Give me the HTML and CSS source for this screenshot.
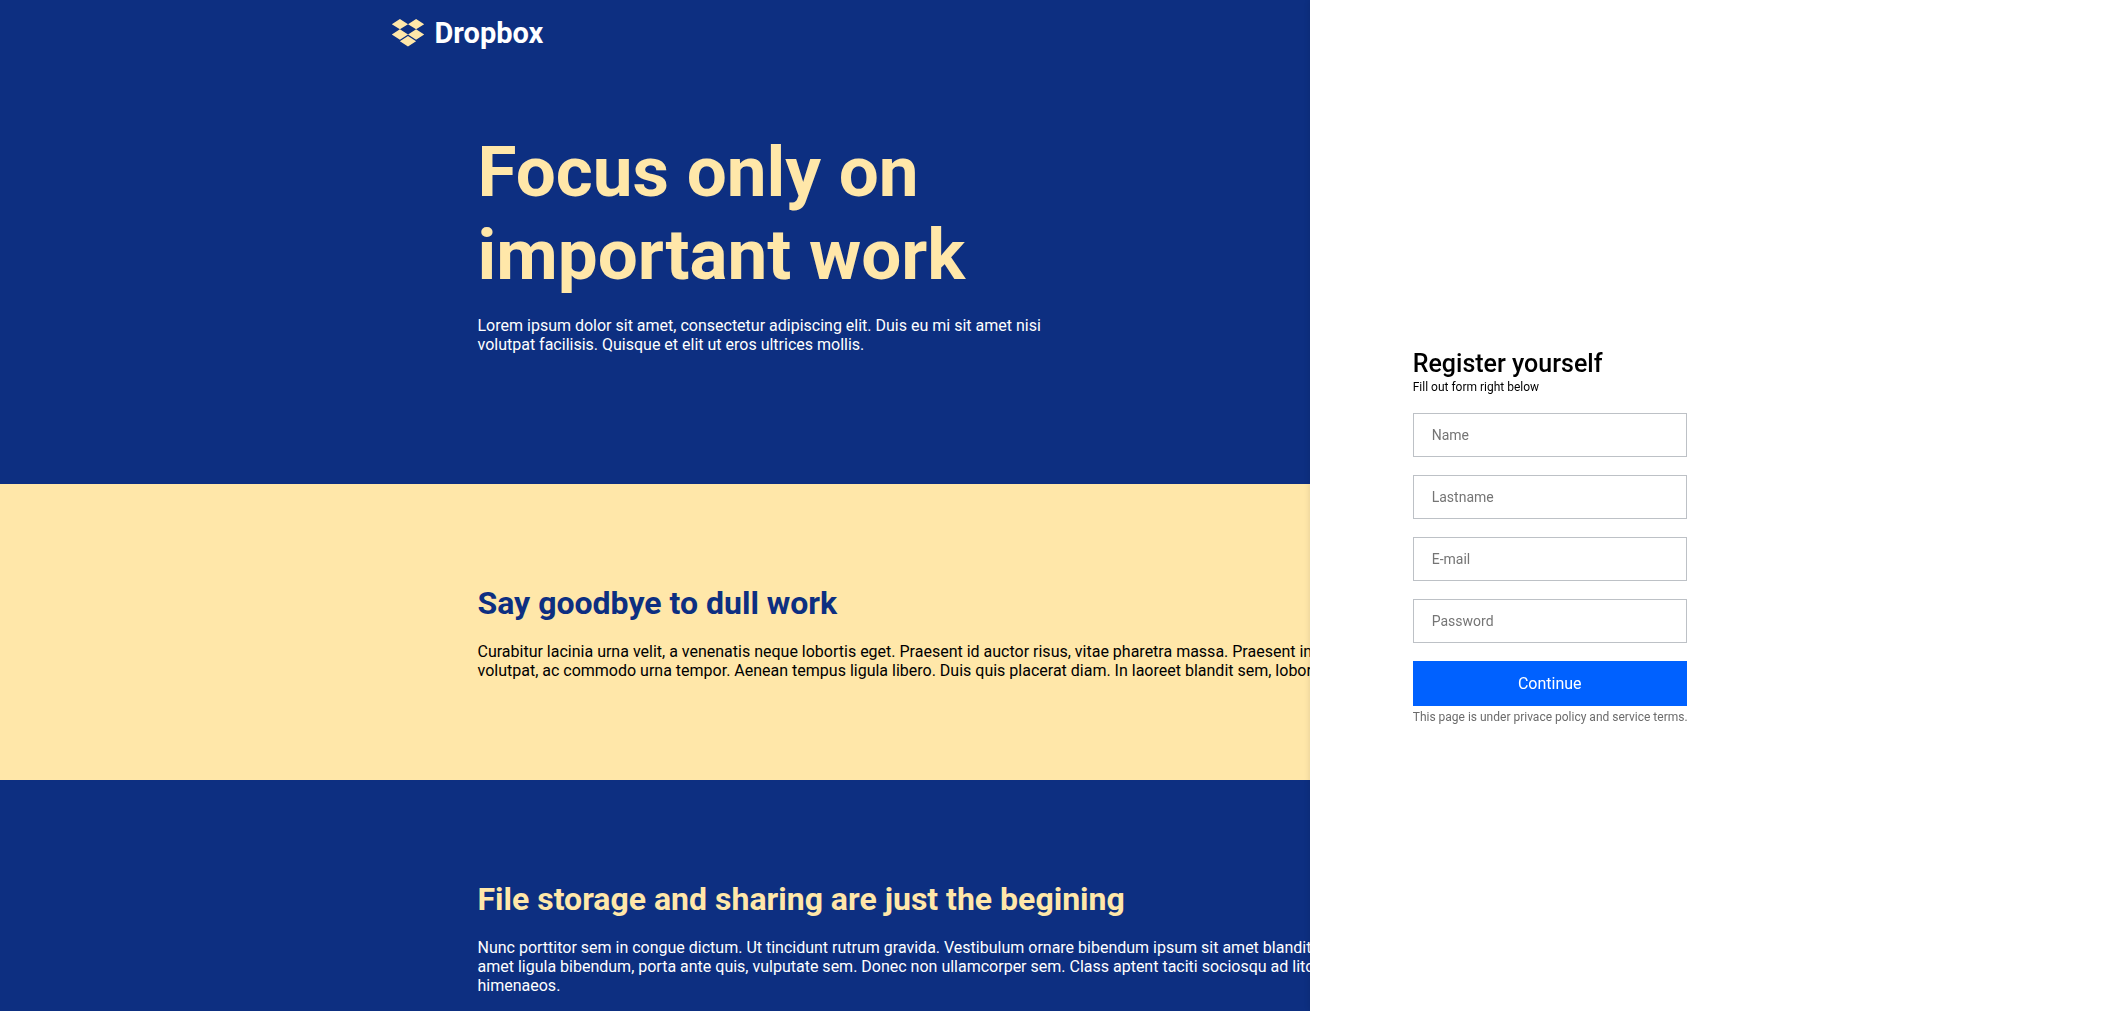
FILE: index.html
```html
<!DOCTYPE html>
<html lang="en">
<head>
<meta charset="utf-8">
<meta name="viewport" content="width=device-width, initial-scale=1">
<title>Dropbox</title>
<link rel="stylesheet" href="styles.css">
</head>
<body>
<main class="page">
  <section class="section section-blue hero">
    <header class="container header">
      <svg class="logo" viewBox="0 0 528 456" aria-hidden="true"><path d="M264.4 84.3l-132 84.3 132 84.3-132 84.3L0 252.1l132.3-84.3L0 84.3 132.3 0l132.1 84.3zm-132.6 278.4l132-84.3 132 84.3-132 84.3-132-84.3zm132.6-110.6l132-84.3-132-83.5L395.7 0 528 84.3l-132.3 84.3L528 252.8l-132.3 84.3-131.3-85z"/></svg>
      <span class="brand">Dropbox</span>
    </header>
    <div class="container content">
      <h1>Focus only on<br>important work</h1>
      <p>Lorem ipsum dolor sit amet, consectetur adipiscing elit. Duis eu mi sit amet nisi<br>volutpat facilisis. Quisque et elit ut eros ultrices mollis.</p>
    </div>
  </section>
  <section class="section section-cream">
    <div class="container content">
      <h2>Say goodbye to dull work</h2>
      <p>Curabitur lacinia urna velit, a venenatis neque lobortis eget. Praesent id auctor risus, vitae pharetra massa. Praesent in<br>volutpat, ac commodo urna tempor. Aenean tempus ligula libero. Duis quis placerat diam. In laoreet blandit sem, lobortis.</p>
    </div>
  </section>
  <section class="section section-blue">
    <div class="container content">
      <h2>File storage and sharing are just the begining</h2>
      <p>Nunc porttitor sem in congue dictum. Ut tincidunt rutrum gravida. Vestibulum ornare bibendum ipsum sit amet blandit<br>amet ligula bibendum, porta ante quis, vulputate sem. Donec non ullamcorper sem. Class aptent taciti sociosqu ad litora<br>himenaeos.</p>
    </div>
  </section>
</main>
<aside class="panel">
  <form class="form">
    <h3>Register yourself</h3>
    <p class="hint">Fill out form right below</p>
    <input type="text" name="name" placeholder="Name" aria-label="Name">
    <input type="text" name="lastname" placeholder="Lastname" aria-label="Lastname">
    <input type="email" name="email" placeholder="E-mail" aria-label="E-mail">
    <input type="password" name="password" placeholder="Password" aria-label="Password">
    <button type="submit">Continue</button>
    <p class="terms">This page is under privace policy and service terms.</p>
  </form>
</aside>
</body>
</html>
```
FILE: styles.css
```css
* {
  box-sizing: border-box;
  margin: 0;
  padding: 0;
}

body {
  font-family: Roboto, "Liberation Sans", sans-serif;
  font-size: 16px;
  line-height: 19px;
  color: #000;
  background: #fff;
}

.page {
  height: 100vh;
  overflow-x: hidden;
  overflow-y: auto;
  scrollbar-width: none;
}

.section {
  padding: 100px 0;
}

.section-blue {
  background: #0d2f81;
  color: #fff;
}

.section-cream {
  background: #ffe7a9;
}

.hero {
  padding: 0 0 130px;
}

.container {
  max-width: 1340px;
  margin: 0 auto;
}

.header {
  display: flex;
  align-items: center;
  gap: 10px;
  height: 66px;
  margin-bottom: 64px;
}

.logo {
  width: 34px;
  height: 28px;
  fill: #ffe7a9;
}

.brand {
  font-size: 29px;
  line-height: 34px;
  font-weight: 700;
}

.content {
  padding: 0 87px;
  white-space: nowrap;
}

h1 {
  margin-bottom: 20px;
  font-size: 71px;
  line-height: 83px;
  color: #ffe7a9;
}

h2 {
  margin-bottom: 20px;
  font-size: 32px;
  line-height: 38px;
  color: #ffe7a9;
}

.section-cream h2 {
  color: #0d2f81;
}

.panel {
  position: fixed;
  top: 0;
  right: 0;
  bottom: 0;
  display: flex;
  align-items: center;
  width: 38.25%;
  padding: 62px 103px 0;
  background: #fff;
  box-shadow: 0 0 6px rgba(0, 0, 0, 0.12);
}

.form {
  display: flex;
  flex-direction: column;
  width: 274px;
}

h3 {
  font-size: 25px;
  line-height: 30px;
  font-weight: 500;
}

.hint {
  margin-bottom: 18px;
  font-size: 12px;
  line-height: 16px;
}

input {
  height: 44px;
  margin-bottom: 18px;
  padding: 0 18px;
  border: 1px solid #bdc1c6;
  background: #fff;
  font: 14px Roboto, "Liberation Sans", sans-serif;
}

input::placeholder {
  color: #757575;
}

button {
  height: 45px;
  margin-bottom: 4px;
  border: 0;
  background: #0061ff;
  color: #fff;
  font: 16px Roboto, "Liberation Sans", sans-serif;
}

.terms {
  font-size: 12px;
  line-height: 14px;
  color: #6b6b6b;
  white-space: nowrap;
}
```
